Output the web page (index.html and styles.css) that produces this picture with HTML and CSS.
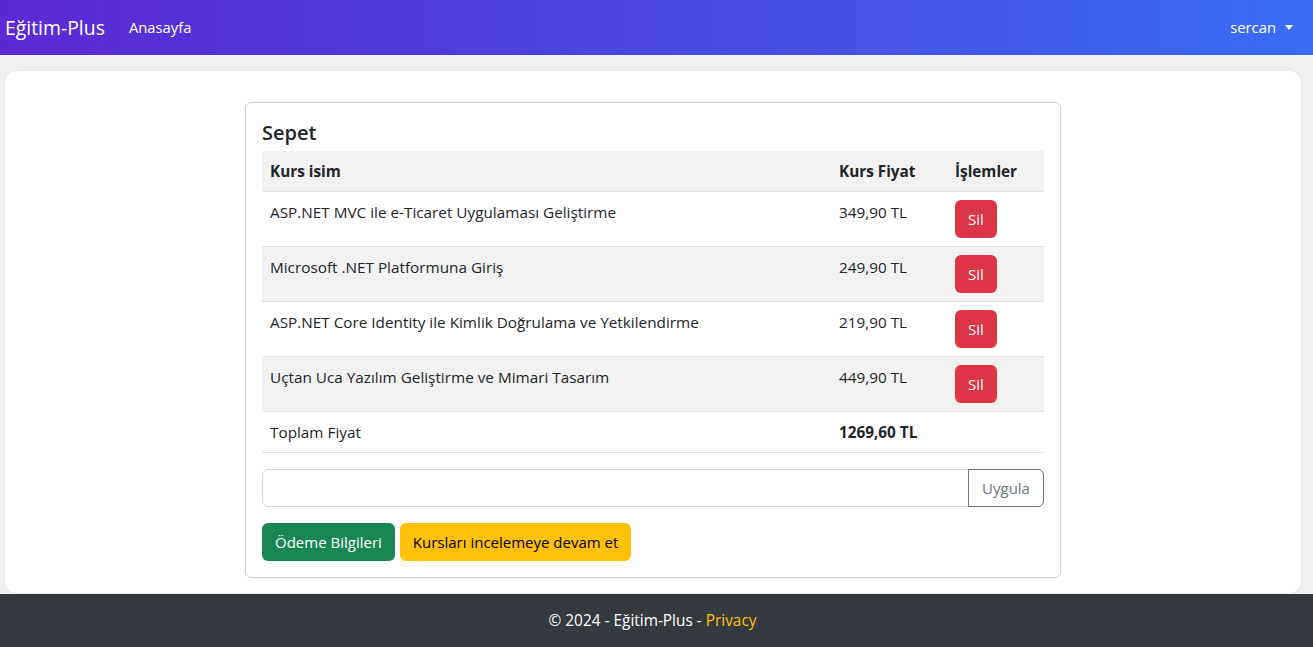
FILE: index.html
```html
<!DOCTYPE html>
<html lang="tr">
<head>
<meta charset="utf-8">
<title>Sepet</title>
<link rel="stylesheet" href="styles.css">
</head>
<body>
<nav class="navbar">
  <div class="nav-left">
    <a class="brand" href="#">Eğitim-Plus</a>
    <a class="nav-link" href="#">Anasayfa</a>
  </div>
  <a class="nav-link user" href="#">sercan<span class="caret"></span></a>
</nav>
<main class="page">
  <div class="sheet">
    <div class="card">
      <h4 class="card-title">Sepet</h4>
      <table class="cart">
        <thead>
          <tr><th class="c-name">Kurs isim</th><th class="c-price">Kurs Fiyat</th><th class="c-act">İşlemler</th></tr>
        </thead>
        <tbody>
          <tr><td>ASP.NET MVC ile e-Ticaret Uygulaması Geliştirme</td><td>349,90 TL</td><td><button class="btn btn-danger">Sil</button></td></tr>
          <tr class="alt"><td>Microsoft .NET Platformuna Giriş</td><td>249,90 TL</td><td><button class="btn btn-danger">Sil</button></td></tr>
          <tr><td>ASP.NET Core Identity ile Kimlik Doğrulama ve Yetkilendirme</td><td>219,90 TL</td><td><button class="btn btn-danger">Sil</button></td></tr>
          <tr class="alt"><td>Uçtan Uca Yazılım Geliştirme ve Mimari Tasarım</td><td>449,90 TL</td><td><button class="btn btn-danger">Sil</button></td></tr>
          <tr class="total"><td>Toplam Fiyat</td><td><strong>1269,60 TL</strong></td><td></td></tr>
        </tbody>
      </table>
      <div class="input-group">
        <input class="coupon" type="text">
        <button class="btn btn-outline">Uygula</button>
      </div>
      <div class="actions">
        <button class="btn btn-success">Ödeme Bilgileri</button>
        <button class="btn btn-warning">Kursları incelemeye devam et</button>
      </div>
    </div>
  </div>
</main>
<footer class="footer">© 2024 - Eğitim-Plus - <a href="#" class="privacy">Privacy</a></footer>
</body>
</html>
```
FILE: styles.css
```css
* { box-sizing: border-box; }
html, body { margin: 0; padding: 0; }
body {
  font-family: "Segoe UI", "Open Sans", "Noto Sans", sans-serif;
  font-size: 16px;
  line-height: 1.5;
  color: #212529;
  background: #f1f1f3;
  height: 647px;
  display: flex;
  flex-direction: column;
  overflow: hidden;
}
a { text-decoration: none; }
.navbar {
  height: 55px;
  flex: none;
  display: flex;
  align-items: center;
  justify-content: space-between;
  padding: 0 20px 0 5px;
  background: linear-gradient(90deg, #5a29d3 0%, #4a47e0 50%, #3a6cf5 100%);
}
.nav-left { display: flex; align-items: center; }
.brand { color: #fff; font-size: 19.4px; margin-right: 24px; }
.nav-link { color: #fff; font-size: 14.8px; }
.user { display: flex; align-items: center; }
.caret {
  display: inline-block;
  margin-left: 9px;
  width: 0; height: 0;
  border-left: 4px solid transparent;
  border-right: 4px solid transparent;
  border-top: 5px solid #fff;
}
.page {
  flex: 1;
  padding: 16px 12px 0 5px;
}
.sheet {
  background: #fff;
  border-radius: 12px;
  height: 522px;
  box-shadow: 0 0 6px rgba(0,0,0,0.06);
  padding-top: 31px;
}
.card {
  width: 816px;
  margin-left: 240px;
  border: 1px solid #d0d0d4;
  border-radius: 6px;
  padding: 16px 16px 16px 16px;
}
.card-title {
  margin: 0 0 4px 0;
  font-size: 20px;
  font-weight: 600;
  line-height: 28px;
}
.cart {
  width: 782px;
  border-collapse: collapse;
  margin-bottom: 16px;
}
.cart th, .cart td {
  padding: 8px;
  text-align: left;
  vertical-align: top;
  border-bottom: 1px solid #dee2e6;
  font-size: 15.3px;
}
.cart th { background: #f2f2f2; font-weight: 700; line-height: 24px; }
.cart td { line-height: 24px; height: 55px; }
.cart .total td { height: 41px; }
.c-name { width: 569px; }
.c-price { width: 116px; }
.cart tr.alt td { background: #f2f2f2; }
.btn {
  font-family: inherit;
  font-size: 15px;
  line-height: 24px;
  padding: 6px 12px;
  border-radius: 6px;
  border: 1px solid transparent;
  cursor: pointer;
}
.btn-danger { background: #dc3545; color: #fff; }
.input-group { display: flex; height: 38px; margin-bottom: 16px; }
.coupon {
  flex: 1;
  border: 1px solid #ced4da;
  border-radius: 6px 0 0 6px;
  font-family: inherit;
  font-size: 16px;
  padding: 6px 12px;
}
.btn-outline {
  background: #fff;
  color: #6c757d;
  border: 1px solid #6c757d;
  border-radius: 0 6px 6px 0;
  margin-left: -1px;
  width: 76px;
}
.actions { display: flex; gap: 5px; }
.btn-success { background: #198754; color: #fff; }
.btn-warning { background: #ffc107; color: #000; }
.footer {
  height: 53px;
  flex: none;
  background: #343a40;
  color: #fff;
  display: flex;
  align-items: center;
  justify-content: center;
  font-size: 15.4px;
  padding-right: 8px;
}
.privacy { color: #ffc107; margin-left: 4px; }
```
